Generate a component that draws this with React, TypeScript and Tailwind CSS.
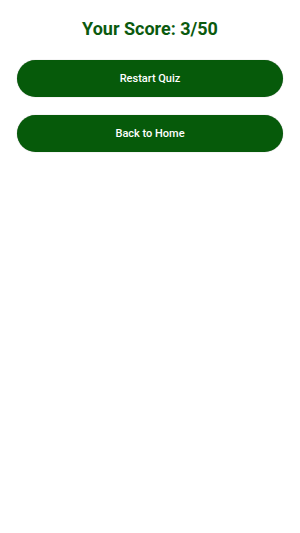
import React from 'react';

const App: React.FC = () => {
  return (
    <div className="min-h-[533px] bg-white px-[17px] pt-[17px] font-['Roboto',sans-serif]">
      <h1 className="text-center text-[18px] font-bold leading-[24px] text-[#0b5a0e]">Your Score: 3/50</h1>
      <div className="mt-[19px] flex flex-col gap-[18px]">
        <button className="h-[37px] w-full rounded-full bg-[#065a0a] pt-[1px] text-[11px] font-medium text-white shadow-[0_0_1px_rgba(0,0,0,0.4)]">
          Restart Quiz
        </button>
        <button className="h-[37px] w-full rounded-full bg-[#065a0a] pt-[1px] text-[11px] font-medium text-white shadow-[0_0_1px_rgba(0,0,0,0.4)]">
          Back to Home
        </button>
      </div>
    </div>
  );
};

export default App;
